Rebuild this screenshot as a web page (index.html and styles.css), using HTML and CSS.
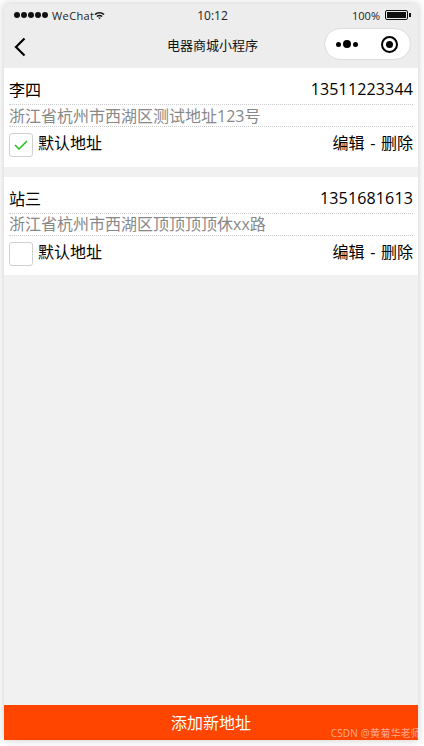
FILE: index.html
```html
<!DOCTYPE html>
<html lang="zh-CN">
<head>
  <meta charset="UTF-8">
  <title>电器商城小程序</title>
  <link rel="stylesheet" href="styles.css">
</head>
<body>
  <div class="phone">
    <div class="status-bar">
      <div class="status-left">
        <span class="signal"><i></i><i></i><i></i><i></i><i></i></span>
        <span class="carrier">WeChat</span>
        <svg class="wifi" width="11" height="9" viewBox="0 0 13 10">
          <path d="M0.5 3.2C4 0 9 0 12.500 3.200L11.300 4.500C8.500 2 4.500 2 1.700 4.500Z" fill="#111"/>
          <path d="M2.800 5.500C5 3.700 8 3.700 10.200 5.500L9 6.800C7.500 5.600 5.500 5.600 4 6.800Z" fill="#111"/>
          <path d="M5 7.800C5.900 7.100 7.100 7.100 8 7.800L6.500 9.500Z" fill="#111"/>
        </svg>
      </div>
      <div class="status-time">10:12</div>
      <div class="status-right">
        <span>100%</span>
        <span class="battery"><i></i></span>
        <span class="battery-tip"></span>
      </div>
    </div>

    <div class="nav-bar">
      <svg class="back" width="12" height="20" viewBox="0 0 12 20">
        <path d="M10.500 1.500L2 10L10.500 18.500" fill="none" stroke="#000" stroke-width="2.200"/>
      </svg>
      <div class="nav-title">电器商城小程序</div>
      <div class="capsule">
        <div class="capsule-dots"><i></i><b></b><i></i></div>
        <div class="capsule-target"><i></i></div>
      </div>
    </div>

    <div class="address-list">
      <div class="address-card">
        <div class="row row-name"><span>李四</span><span class="mobile">13511223344</span></div>
        <div class="row row-addr">浙江省杭州市西湖区测试地址123号</div>
        <div class="row row-actions">
          <label class="default-check">
            <span class="checkbox">
              <svg width="14" height="10" viewBox="0 0 14 10"><path d="M1 5L5 9L13 1" fill="none" stroke="#1fc01d" stroke-width="1.500"/></svg>
            </span>
            默认地址
          </label>
          <span class="links">编辑 - 删除</span>
        </div>
      </div>

      <div class="address-card">
        <div class="row row-name"><span>站三</span><span class="mobile">1351681613</span></div>
        <div class="row row-addr">浙江省杭州市西湖区顶顶顶顶休xx路</div>
        <div class="row row-actions">
          <label class="default-check">
            <span class="checkbox"></span>
            默认地址
          </label>
          <span class="links">编辑 - 删除</span>
        </div>
      </div>
    </div>

    <div class="add-btn">添加新地址</div>
  </div>
  <div class="watermark">CSDN @黄菊华老师</div>
</body>
</html>
```

FILE: styles.css
```css
* {
  box-sizing: border-box;
}

html, body {
  height: 100%;
}

body {
  margin: 0;
  padding: 4px 6px 6px 4px;
  background: #fff;
  font-family: "Open Sans", "Noto Sans CJK SC", sans-serif;
  color: #000;
  overflow: hidden;
}

.phone {
  width: 414px;
  height: 736px;
  background: #f1f1f1;
  display: flex;
  flex-direction: column;
  box-shadow: 0 0 8px rgba(0, 0, 0, 0.22);
}

.status-bar {
  height: 22px;
  padding: 0 7px 0 10px;
  background: #ededed;
  display: grid;
  grid-template-columns: 1fr auto 1fr;
  align-items: center;
  font-size: 11px;
  color: #222;
}

.status-left, .status-right {
  display: flex;
  align-items: center;
}

.status-right {
  justify-content: flex-end;
}

.signal {
  display: flex;
  gap: 1px;
  margin-right: 4px;
}

.signal i {
  width: 6px;
  height: 6px;
  border-radius: 50%;
  background: #111;
}

.carrier {
  letter-spacing: 0.4px;
}

.status-time {
  font-size: 12px;
}

.battery {
  width: 23px;
  height: 10px;
  margin-left: 5px;
  padding: 1px;
  border: 1px solid #111;
  border-radius: 2px;
  display: block;
}

.battery i {
  display: block;
  height: 100%;
  background: #111;
}

.battery-tip {
  width: 2px;
  height: 4px;
  margin-left: 1px;
  background: #111;
}

.nav-bar {
  height: 42px;
  padding: 0 7px 0 10px;
  background: #ededed;
  display: grid;
  grid-template-columns: 1fr auto 1fr;
  align-items: center;
}

.nav-title {
  font-size: 13px;
  color: #111;
  padding-bottom: 6px;
}

.capsule {
  width: 87px;
  height: 32px;
  justify-self: end;
  align-self: start;
  margin-top: 2px;
  border: 1px solid #dcdcdc;
  border-radius: 16px;
  background: #fff;
  display: flex;
  align-items: center;
}

.capsule-dots {
  width: 43px;
  display: flex;
  align-items: center;
  justify-content: center;
  gap: 2px;
}

.capsule-dots i {
  width: 5px;
  height: 5px;
  border-radius: 50%;
  background: #000;
}

.capsule-dots b {
  width: 8px;
  height: 8px;
  border-radius: 50%;
  background: #000;
}

.capsule-target {
  flex: 1;
  display: flex;
  justify-content: center;
}

.capsule-target i {
  width: 17px;
  height: 17px;
  border: 2px solid #000;
  border-radius: 50%;
  display: block;
}

.capsule-target i::after {
  content: "";
  display: block;
  width: 7px;
  height: 7px;
  margin: 3px;
  border-radius: 50%;
  background: #000;
}

.address-list {
  flex: 1;
}

.address-card {
  background: #fff;
  margin-bottom: 10px;
  padding: 8px 5px 9.6px;
  font-size: 16px;
}

.row {
  display: flex;
  justify-content: space-between;
  align-items: center;
}

.row-name {
  height: 29px;
  padding-bottom: 2px;
  border-bottom: 1px dotted #ccc;
}

.mobile {
  letter-spacing: 0.15px;
}

.row-addr {
  height: 22px;
  padding-bottom: 2px;
  color: #888;
  border-bottom: 1px dotted #ccc;
}

.row-actions {
  height: 30px;
  padding-top: 6px;
  align-items: flex-start;
}

.default-check {
  display: flex;
  line-height: 20px;
}

.checkbox {
  width: 24px;
  height: 24px;
  margin-right: 5px;
  border: 1px solid #d1d1d1;
  border-radius: 3px;
  display: flex;
  align-items: center;
  justify-content: center;
}

.links {
  line-height: 20px;
  word-spacing: 1.5px;
}

.add-btn {
  height: 35px;
  padding-bottom: 1px;
  background: #ff4500;
  color: #fff;
  font-size: 16px;
  display: flex;
  align-items: center;
  justify-content: center;
}

.watermark {
  position: absolute;
  right: 3px;
  bottom: 6px;
  font-size: 10px;
  color: rgba(255, 255, 255, 0.55);
  letter-spacing: 0.2px;
}
```
